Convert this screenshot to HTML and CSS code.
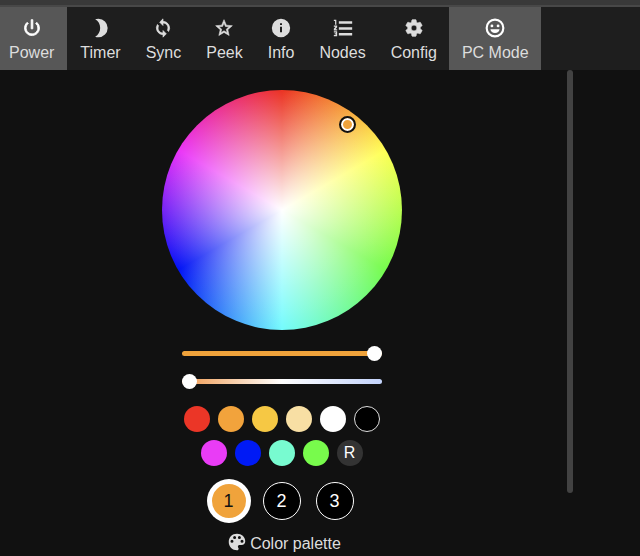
FILE: index.html
```
<!DOCTYPE html>
<html lang="en">
<head>
<meta charset="utf-8">
<title>Light control</title>
<link rel="stylesheet" href="styles.css">
</head>
<body>
<nav class="tabs">
  <button class="tab active" type="button">
    <svg class="icon" viewBox="0 0 24 24"><path d="M13 2h-2v11h2V2zm4.800 3.200l-1.400 1.400A6.900 6.900 0 0 1 19 12a7 7 0 1 1-11.400-5.400L6.200 5.200A9 9 0 1 0 21 12a8.900 8.900 0 0 0-3.200-6.800z" stroke="currentColor" stroke-width="1"/></svg>
    <span>Power</span>
  </button>
  <button class="tab" type="button">
    <svg class="icon" viewBox="0 0 24 24"><path d="M9 1c-1.800 0-3 .2-4 .6C8.800 3.500 11 7.600 11 12s-2.200 8.500-6 10.400c1 .4 2.200.6 4 .6a11 11 0 0 0 0-22z"/></svg>
    <span>Timer</span>
  </button>
  <button class="tab" type="button">
    <svg class="icon" viewBox="0 0 24 24"><path d="M12 4V1L8 5l4 4V6a6 6 0 0 1 5.250 8.800l1.460 1.460A8 8 0 0 0 12 4zm0 14a6 6 0 0 1-5.250-8.800L5.290 7.740A8 8 0 0 0 12 20v3l4-4-4-4v3z" stroke="currentColor" stroke-width=".8"/></svg>
    <span>Sync</span>
  </button>
  <button class="tab" type="button">
    <svg class="icon" viewBox="0 0 24 24"><path d="M22 9.240l-7.190-.62L12 2 9.190 8.630 2 9.240l5.460 4.730L5.820 21 12 17.270 18.180 21l-1.630-7.030L22 9.240zM12 15.400l-3.760 2.270 1-4.280-3.320-2.880 4.380-.38L12 6.100l1.710 4.040 4.380.38-3.320 2.880 1 4.280L12 15.400z" stroke="currentColor" stroke-width=".7"/></svg>
    <span>Peek</span>
  </button>
  <button class="tab" type="button">
    <svg class="icon" viewBox="0 0 24 24"><path fill-rule="evenodd" d="M12 1a11 11 0 1 0 0 22 11 11 0 0 0 0-22zm1.200 16h-2.400v-6.500h2.400V17zm0-8.500h-2.400V6.200h2.400v2.300z"/></svg>
    <span>Info</span>
  </button>
  <button class="tab" type="button">
    <svg class="icon" viewBox="0 0 24 24"><path d="M7 4h16v3H7zM7 11h16v3H7zM7 18h16v3H7zM1 2h3v6H2.500V3.500H1zM1 9h4v2l-2 2.500h2V15H1v-2l2-2.500H1zM1 16h4v6H1v-1.500h2.500v-.8H2v-1.400h1.500v-.8H1z"/></svg>
    <span>Nodes</span>
  </button>
  <button class="tab" type="button">
    <svg class="icon" viewBox="0 0 24 24"><path d="M19.430 12.980c.04-.32.070-.64.070-.98s-.03-.66-.07-.98l2.110-1.650c.19-.15.240-.42.120-.64l-2-3.460c-.12-.22-.39-.3-.61-.22l-2.490 1c-.52-.4-1.080-.73-1.690-.98l-.38-2.650A.49.49 0 0 0 14 2h-4c-.25 0-.46.180-.49.420l-.38 2.650c-.61.250-1.170.590-1.690.98l-2.490-1c-.23-.09-.49 0-.61.220l-2 3.460c-.13.220-.07.490.120.640l2.110 1.650c-.04.320-.07.650-.07.980s.03.660.07.980l-2.110 1.650c-.19.150-.24.420-.12.640l2 3.460c.12.220.39.300.61.220l2.490-1c.52.400 1.080.730 1.690.980l.38 2.650c.03.240.24.420.49.420h4c.25 0 .46-.18.490-.42l.38-2.650c.61-.25 1.170-.59 1.690-.98l2.490 1c.23.090.49 0 .61-.22l2-3.460c.12-.22.07-.49-.12-.64l-2.110-1.650zM12 15.500a3.500 3.500 0 1 1 0-7 3.500 3.500 0 0 1 0 7z" stroke="currentColor" stroke-width=".8"/></svg>
    <span>Config</span>
  </button>
  <button class="tab active" type="button">
    <svg class="icon" viewBox="0 0 24 24"><circle cx="12" cy="12" r="10" fill="none" stroke="currentColor" stroke-width="2.600"/><circle cx="8.300" cy="9.500" r="1.700"/><circle cx="15.700" cy="9.500" r="1.700"/><path d="M6.500 13.500h11a5.600 5.600 0 0 1-11 0z"/></svg>
    <span>PC Mode</span>
  </button>
</nav>
<div class="layout">
  <main class="panel">
    <div class="wheel"><span class="handle"></span></div>
    <div class="sliders">
      <input class="slider brightness" type="range" min="0" max="255" value="255" aria-label="Brightness">
      <input class="slider warmth" type="range" min="0" max="255" value="0" aria-label="White temperature">
    </div>
    <div class="swatches">
      <button class="swatch red" type="button" aria-label="Red"></button>
      <button class="swatch orange" type="button" aria-label="Orange"></button>
      <button class="swatch amber" type="button" aria-label="Amber"></button>
      <button class="swatch cream" type="button" aria-label="Warm white"></button>
      <button class="swatch white" type="button" aria-label="White"></button>
      <button class="swatch black" type="button" aria-label="Black"></button>
      <button class="swatch magenta" type="button" aria-label="Magenta"></button>
      <button class="swatch blue" type="button" aria-label="Blue"></button>
      <button class="swatch aqua" type="button" aria-label="Aqua"></button>
      <button class="swatch green" type="button" aria-label="Green"></button>
      <button class="swatch random" type="button">R</button>
    </div>
    <div class="slots">
      <button class="slot selected" type="button">1</button>
      <button class="slot" type="button">2</button>
      <button class="slot" type="button">3</button>
    </div>
    <h2 class="heading">
      <svg class="palette" viewBox="0 0 24 24"><path fill-rule="evenodd" d="M12 1C5.500 1 1 5.700 1 12s5 11 11 11c1.500 0 2.200-1 2.200-2.100 0-1.300-1-1.700-1-3 0-1.200 1-2 2.300-2H18c3 0 5-2 5-5C23 5.200 18 1 12 1zM5.300 13a2 2 0 1 1 0-4 2 2 0 0 1 0 4zm3.500-5a2 2 0 1 1 0-4 2 2 0 0 1 0 4zm6.400 0a2 2 0 1 1 0-4 2 2 0 0 1 0 4zm3.500 5a2 2 0 1 1 0-4 2 2 0 0 1 0 4z"/></svg>
      <span>Color palette</span>
    </h2>
  </main>
  <div class="scrollbar"></div>
</div>
</body>
</html>
```
FILE: styles.css
```
* {
  box-sizing: border-box;
}

body {
  margin: 0;
  background: #111;
  color: #ddd;
  font: 16px/20px "Liberation Sans", Arial, sans-serif;
  border-top: 5px solid #393939;
  overflow: hidden;
}

button {
  font: inherit;
  padding: 0;
  border: 0;
}

.tabs {
  display: flex;
  background: #1e1e1e;
  border-top: 2px solid #484848;
}

.tab {
  display: flex;
  flex-direction: column;
  align-items: center;
  gap: 5px;
  padding: 11px 12px 7px 13px;
  background: none;
  color: #ddd;
  white-space: nowrap;
}

.tab:first-child {
  padding-left: 9px;
  padding-right: 13px;
}

.tab.active {
  background: #575757;
}

.tab.active .icon {
  color: #fff;
}

.icon {
  width: 20px;
  height: 20px;
  fill: currentColor;
}

.layout {
  display: grid;
  grid-template-columns: 1fr 6px;
  padding-right: 67px;
}

.panel {
  display: flex;
  flex-direction: column;
  align-items: center;
  padding: 20px 4px 0 0;
}

.scrollbar {
  height: 423px;
  border-radius: 3px;
  background: #424242;
}

.wheel {
  position: relative;
  width: 240px;
  height: 240px;
  border-radius: 50%;
  background:
    radial-gradient(closest-side, #fff, rgba(255, 255, 255, 0)),
    conic-gradient(#eb3323, #ffff54 60deg, #75fb4c 120deg, #74fbfd 180deg, #0012f5 240deg, #ea33f7 300deg, #eb3323);
}

.handle {
  position: absolute;
  left: 74%;
  top: 11%;
  width: 17px;
  height: 17px;
  border: 2px solid #111;
  border-radius: 50%;
  background: #f0a33b;
  box-shadow: inset 0 0 0 2px #fff;
}

.sliders {
  display: flex;
  flex-direction: column;
  gap: 12px;
  margin: 15px 0 17px;
}

.slider {
  appearance: none;
  width: 200px;
  height: 16px;
  margin: 0;
  background: none;
}

.slider::-webkit-slider-runnable-track {
  height: 5px;
  border-radius: 3px;
}

.brightness::-webkit-slider-runnable-track {
  background: #f0a33b;
}

.warmth::-webkit-slider-runnable-track {
  background: linear-gradient(90deg, #f09a50, #fff 50%, #c3d3fb);
}

.slider::-webkit-slider-thumb {
  appearance: none;
  width: 15px;
  height: 15px;
  margin-top: -5px;
  border-radius: 50%;
  background: #fff;
}

.swatches {
  display: flex;
  flex-wrap: wrap;
  justify-content: center;
  gap: 8px;
  width: 200px;
}

.swatch {
  width: 26px;
  height: 26px;
  border-radius: 50%;
  color: #fff;
}

.red { background: #eb3627; }
.orange { background: #f2a33c; }
.amber { background: #f6c844; }
.cream { background: #f8dfa4; }
.white { background: #fff; }
.black { background: #000; border: 1px solid #ddd; }
.magenta { background: #e93cf6; }
.blue { background: #001af5; }
.aqua { background: #78fbd0; }
.green { background: #78fb4c; }
.random { background: #333; }

.slots {
  display: flex;
  gap: 15px;
  margin: 16px 0 13px;
}

.slot {
  width: 38px;
  height: 38px;
  border: 1px solid #fff;
  border-radius: 50%;
  background: #000;
  color: #fff;
  font-size: 18px;
}

.slot.selected {
  border-width: 2px;
  box-shadow: 0 0 0 3px #fff;
  background: #f0a33b;
  color: #111;
}

.heading {
  display: flex;
  align-items: flex-end;
  gap: 4px;
  margin: 0;
  padding-left: 6px;
  font-size: 16px;
  line-height: 18px;
  font-weight: normal;
}

.palette {
  width: 18px;
  height: 18px;
  margin-bottom: 2px;
  fill: currentColor;
}
```
